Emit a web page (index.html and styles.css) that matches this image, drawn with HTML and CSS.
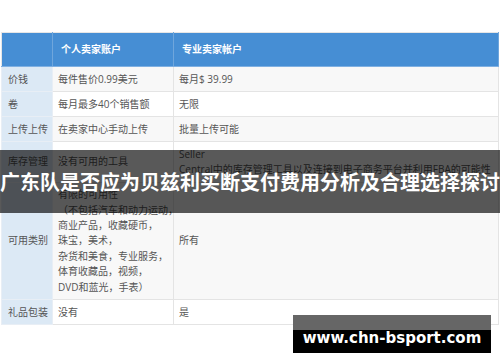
FILE: index.html
```html
<!DOCTYPE html>
<html lang="zh-CN">
<head>
<meta charset="utf-8">
<link rel="stylesheet" href="styles.css">
</head>
<body>
<div class="page">
  <table class="cmp">
    <colgroup>
      <col class="c1"><col class="c2"><col class="c3">
    </colgroup>
    <thead>
      <tr><th></th><th>个人卖家账户</th><th>专业卖家帐户</th></tr>
    </thead>
    <tbody>
      <tr class="alt"><td class="lbl">价钱</td><td>每件售价0.99美元</td><td>每月$ 39.99</td></tr>
      <tr><td class="lbl">卷</td><td>每月最多40个销售额</td><td>无限</td></tr>
      <tr class="alt"><td class="lbl">上传上传</td><td>在卖家中心手动上传</td><td>批量上传可能</td></tr>
      <tr><td class="lbl">库存管理</td><td>没有可用的工具</td><td class="nw">Seller<br>Central中的库存管理工具以及连接到电子商务平台并利用FBA的可能性</td></tr>
      <tr class="alt"><td class="lbl">可用类别</td><td class="nw">有限的可用性<br>（不包括汽车和动力运动，<br>商业产品，收藏硬币，<br>珠宝，美术，<br>杂货和美食，专业服务，<br>体育收藏品，视频，<br>DVD和蓝光，手表）</td><td>所有</td></tr>
      <tr><td class="lbl">礼品包装</td><td>没有</td><td>是</td></tr>
    </tbody>
  </table>
  <div class="banner">广东队是否应为贝兹利买断支付费用分析及合理选择探讨</div>
  <div class="mark">www.chn-bsport.com</div>
</div>
</body>
</html>
```
FILE: styles.css
```css
* { box-sizing: border-box; }
html, body { margin: 0; padding: 0; background: #fff; }
body {
  width: 500px;
  height: 362px;
  overflow: hidden;
  font-family: "Open Sans", "Noto Sans CJK SC", sans-serif;
}
.page {
  position: relative;
  width: 500px;
  height: 362px;
  padding: 32px 2px 0 1px;
}
.cmp {
  width: 497px;
  table-layout: fixed;
  border-collapse: collapse;
  border: 1px solid #e6e6e6;
  font-size: 10px;
  line-height: 15.4px;
  color: #555;
}
.c1 { width: 51px; }
.c2 { width: 121px; }
.c3 { width: 325px; }
.cmp th {
  background: #468ed4;
  color: #fff;
  font-weight: bold;
  text-align: left;
  padding: 9px 8px;
  border-right: 1px solid #6fa6dc;
  border-bottom: 1px solid #7fb0e2;
}
.cmp td {
  padding: 4.3px 5px;
  vertical-align: middle;
  border: 1px solid #e4e4e4;
  background: #fff;
}
.cmp tr.alt td { background: #f8f8f8; }
.cmp td.lbl, .cmp tr.alt td.lbl {
  background: #dce9f5;
  padding-left: 6px;
  padding-right: 0;
  white-space: nowrap;
  border-color: #e8eef5;
}
.cmp td.nw { white-space: nowrap; }
.banner {
  position: absolute;
  left: 0;
  top: 150px;
  width: 500px;
  height: 63px;
  background: rgba(0, 0, 0, 0.65);
  color: #fff;
  font-family: "Noto Sans CJK SC", sans-serif;
  font-weight: bold;
  font-size: 20px;
  line-height: 63px;
  text-align: center;
  white-space: nowrap;
}
.mark {
  position: absolute;
  left: 293px;
  top: 315px;
  width: 198px;
  height: 38px;
  background: linear-gradient(#666 0, #666 15px, #000 15px, #000 100%);
  color: #fff;
  font-family: "DejaVu Sans", sans-serif;
  font-weight: bold;
  font-size: 15px;
  line-height: 20px;
  padding-top: 13px;
  text-align: center;
  white-space: nowrap;
}
```
